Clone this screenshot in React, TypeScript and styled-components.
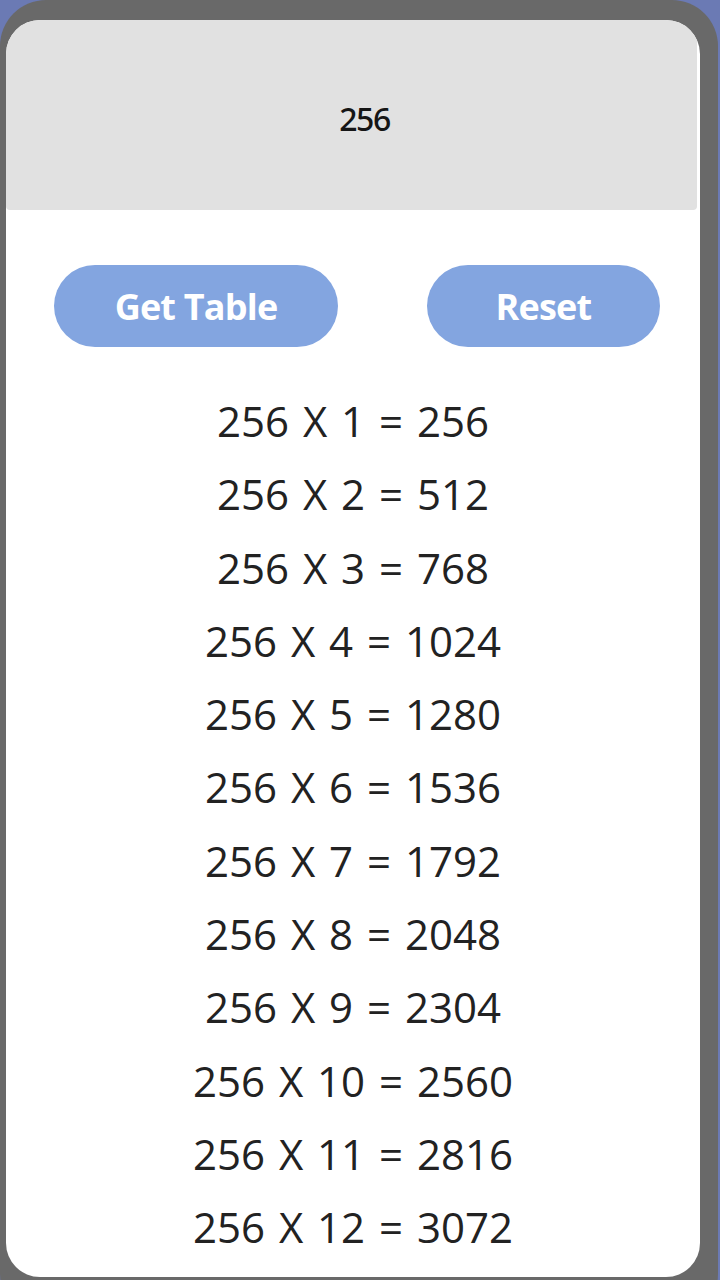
import React, { useState } from 'react'
import styled, { createGlobalStyle } from 'styled-components'

const GlobalStyle = createGlobalStyle`
  html, body {
    margin: 0;
    padding: 0;
    background: #6b7ab4;
    overflow: hidden;
  }
`

const NUMBER = 256
const ROWS = Array.from({ length: 12 }, (_, i) => i + 1)

export default function App() {
  const [shown, setShown] = useState<boolean>(true)

  return (
    <>
      <GlobalStyle />
      <Phone>
        <Card>
          <Display>
            <DisplayValue>{NUMBER}</DisplayValue>
          </Display>

          <Controls>
            <ActionButton width={284} onClick={() => setShown(true)}>Get Table</ActionButton>
            <ActionButton width={233} onClick={() => setShown(false)}>Reset</ActionButton>
          </Controls>

          {shown &&
            <Table>
              {ROWS.map(n => (
                <Row key={n}>{NUMBER} X {n} = {NUMBER * n}</Row>
              ))}
            </Table>
          }
        </Card>
      </Phone>
    </>
  )
}

const Phone = styled.div`
  width: 718px;
  height: 1320px;
  box-sizing: border-box;
  padding: 20px 18px 0 6px;
  background: #696969;
  border-radius: 46px;
`

const Card = styled.div`
  height: 1257px;
  background: #ffffff;
  border-radius: 34px;
  overflow: hidden;
  display: flex;
  flex-direction: column;
`

const Display = styled.div`
  height: 190px;
  margin-right: 3px;
  background: #e1e1e1;
  border-radius: 0 0 4px 4px;
  display: flex;
  justify-content: center;
  align-items: center;
  padding: 6px 0 0 26px;
  box-sizing: border-box;
`

const DisplayValue = styled.span`
  font-family: "Noto Sans", "Open Sans", sans-serif;
  font-size: 32px;
  font-weight: 500;
  color: #151515;
  letter-spacing: -1.5px;
`

const Controls = styled.div`
  display: flex;
  justify-content: space-between;
  padding: 55px 40px 0 48px;
`

const ActionButton = styled.button<{ width: number }>`
  width: ${props => props.width}px;
  height: 82px;
  border: none;
  border-radius: 41px;
  background: #83a5e0;
  color: #ffffff;
  font-family: "Open Sans", "Noto Sans", sans-serif;
  font-weight: 700;
  font-size: 36px;
  letter-spacing: -0.8px;
  cursor: pointer;
`

const Table = styled.div`
  display: flex;
  flex-direction: column;
  align-items: center;
  padding-top: 37px;
`

const Row = styled.div`
  font-family: "Open Sans", "Noto Sans", sans-serif;
  font-size: 42px;
  line-height: 73.3px;
  color: #222222;
  white-space: pre;
  word-spacing: 3px;
`
